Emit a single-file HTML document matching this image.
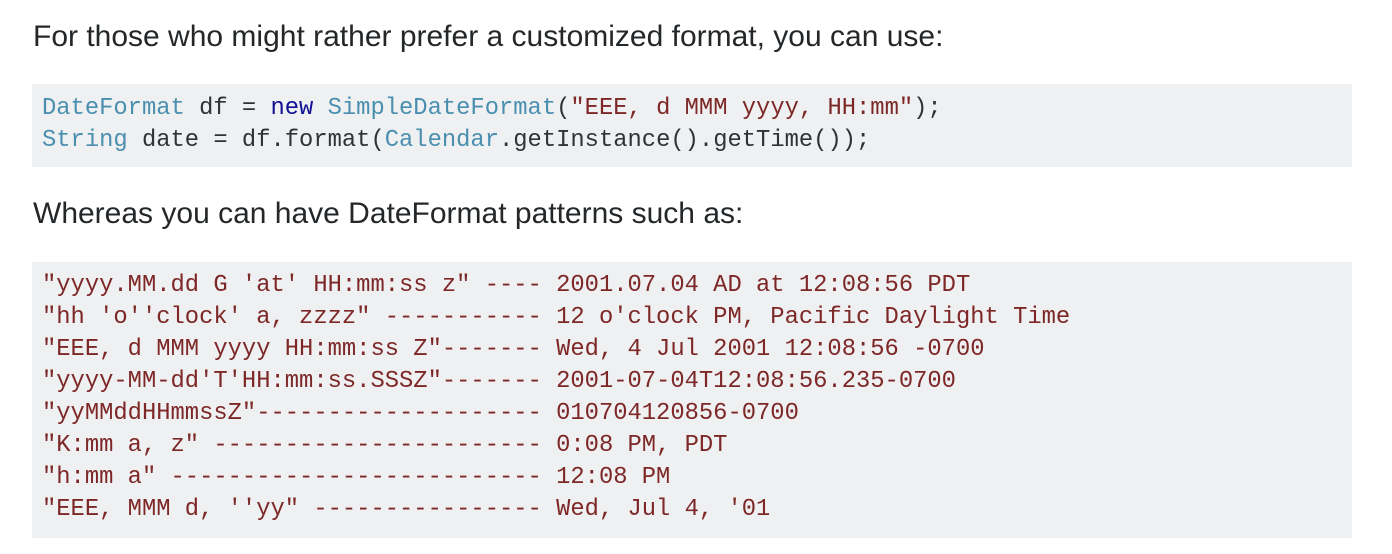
<!DOCTYPE html>
<html><head><meta charset="utf-8"><style>
body{margin:0;background:#fff;width:1392px;height:554px;overflow:hidden;font-family:"Liberation Sans",Arial,sans-serif;color:#242729}
p{position:absolute;left:33px;margin:0;font-size:30px;line-height:34px}
pre{position:absolute;left:32px;width:1320px;margin:0;background:#eff0f1;font-family:"Liberation Mono",monospace;font-size:23.8px;line-height:32px;padding:0 0 0 10px;box-sizing:border-box;color:#303336}
.t{color:#4a8fb0}.k{color:#101094}.s{color:#7d2727}
</style></head><body>
<p style="top:20px">For those who might rather prefer a customized format, you can use:</p>
<pre style="top:84px;height:83px;padding-top:9px"><span class="t">DateFormat</span> df = <span class="k">new</span> <span class="t">SimpleDateFormat</span>(<span class="s">"EEE, d MMM yyyy, HH:mm"</span>);
<span class="t">String</span> date = df.format(<span class="t">Calendar</span>.getInstance().getTime());</pre>
<p style="top:197px">Whereas you can have DateFormat patterns such as:</p>
<pre class="s" style="top:262px;height:276px;padding-top:8px;color:#7d2727">"yyyy.MM.dd G 'at' HH:mm:ss z" ---- 2001.07.04 AD at 12:08:56 PDT
"hh 'o''clock' a, zzzz" ----------- 12 o'clock PM, Pacific Daylight Time
"EEE, d MMM yyyy HH:mm:ss Z"------- Wed, 4 Jul 2001 12:08:56 -0700
"yyyy-MM-dd'T'HH:mm:ss.SSSZ"------- 2001-07-04T12:08:56.235-0700
"yyMMddHHmmssZ"-------------------- 010704120856-0700
"K:mm a, z" ----------------------- 0:08 PM, PDT
"h:mm a" -------------------------- 12:08 PM
"EEE, MMM d, ''yy" ---------------- Wed, Jul 4, '01</pre>
</body></html>
